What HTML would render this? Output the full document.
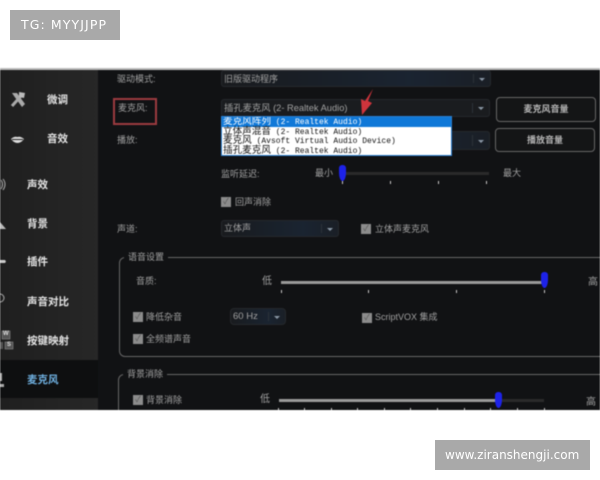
<!DOCTYPE html>
<html><head><meta charset="utf-8"><style>
html,body{margin:0;padding:0;background:#fff}
#r{position:relative;width:600px;height:480px;overflow:hidden;background:#fff;font-family:"Liberation Sans","Noto Sans CJK SC",sans-serif}
#a{position:absolute;left:0;top:68px;width:600px;height:342px;background:#111214;border-top:2px solid #bbb;box-sizing:border-box;overflow:hidden;filter:blur(.45px)}
.x{position:absolute}
.w{position:absolute;background:#a9a9a9;color:#fff;font-family:"DejaVu Sans",sans-serif;font-size:12px;line-height:30px;height:30px}
.t{position:absolute;color:#a0a0a0;font-size:9px;line-height:12px;white-space:nowrap}
.n{position:absolute;color:#e4e4e4;font-size:10.500px;line-height:14px;font-weight:bold;white-space:nowrap}
.d{position:absolute;border-radius:3px;background:linear-gradient(90deg,#191b1e,#1a2431 70%,#1a1f26);border:1px solid #25282c;box-sizing:border-box}
.d:after{content:"";position:absolute;right:5px;top:50%;margin-top:-1px;border:3px solid transparent;border-top:3px solid #8a97a5}
.d:before{content:"";position:absolute;right:16px;top:3px;bottom:3px;width:1px;background:#2c3238}
.b{position:absolute;border:1px solid #666;border-radius:4px;box-sizing:border-box;color:#b5b5b5;font-size:9px;font-weight:bold;text-align:center;background:#141516}
.c{position:absolute;width:10px;height:10px;background:#8c8c8c;color:#555;font-size:8px;line-height:10px;text-align:center}
.k{position:absolute;width:1px;height:3px;background:#ccc}
.h{position:absolute;width:7px;height:16px;background:#1d22e8;border-radius:3px 3px 50% 50%}
.g{position:absolute;border:1px solid #666;border-radius:6px;box-sizing:border-box;width:600px}
.l{position:absolute;background:#111214;color:#a0a0a0;font-size:9px;line-height:12px;padding:0 4px}
#m{position:absolute;left:221px;top:46px;width:231px;height:40px;background:#fff;border:1px solid #2a7fd0;box-sizing:border-box;color:#111;font-family:"Liberation Mono",monospace;font-size:8px;line-height:9.500px;white-space:nowrap;overflow:hidden}
#m div{height:9.500px;padding-left:1px}
#m i{font-style:normal;font-family:"Liberation Serif","Noto Sans CJK SC",sans-serif;font-size:9.600px}
</style></head><body><div id="r">
<div class="w" style="left:10px;top:10px;width:110px;padding-left:11px;box-sizing:border-box;font-size:12.500px;letter-spacing:1.100px">TG: MYYJJPP</div>
<div class="w" style="left:435px;top:440px;width:155px;padding-left:10px;box-sizing:border-box">www.ziranshengji.com</div>
<div id="a">
<div class="x" style="left:0;top:0;width:98px;height:340px;background:linear-gradient(90deg,#1f1f1f,#272727)"></div>
<div class="x" style="left:0;top:290px;width:98px;height:38px;background:#0e0f10"></div>

<svg class="x" style="left:0;top:0" width="98" height="340" viewBox="0 70 98 340">
<path d="M12 93l5 0 8 11-3 3-8-11z" fill="#aaa"/>
<path d="M12 106l9-10" stroke="#aaa" stroke-width="3" fill="none"/>
<path d="M19 92l6 1-1 5-5-1z" fill="#bbb"/>
<path d="M11 139q3-3 6.500-2 3-1 6.500 2-3 4-6.500 4t-6.500-4z" fill="#ddd"/><path d="M12 139.500h11" stroke="#222"/>
<path d="M1 180q3 4 0 9M3 179q4 5 0 11" stroke="#aaa" fill="none"/>
<path d="M0 229l0-7 6 7z" fill="#bbb"/>
<path d="M0 260h5l1 1.500-1 1.500h-5z" fill="#ccc"/>
<circle cx="0" cy="298" r="4" stroke="#aaa" fill="none"/>
<rect x="2" y="331" width="8" height="8" fill="#555" stroke="#888" stroke-width=".6"/>
<rect x="5" y="342" width="8" height="7" fill="#555" stroke="#888" stroke-width=".6"/>
<rect x="-4" y="342" width="7" height="7" fill="#555"/>
<path d="M0 373h2v8h-2zM0 384h4v3h-4z" fill="#aaa"/>
</svg>
<div class="x" style="left:3px;top:260px;color:#ddd;font-size:6px;font-weight:bold;line-height:8px">W</div>
<div class="x" style="left:7px;top:271px;color:#ddd;font-size:6px;font-weight:bold;line-height:8px">S</div>

<div class="n" style="left:47px;top:23px">微调</div>
<div class="n" style="left:47px;top:62px">音效</div>
<div class="n" style="left:27px;top:108px">声效</div>
<div class="n" style="left:27px;top:147px">背景</div>
<div class="n" style="left:27px;top:185px">插件</div>
<div class="n" style="left:27px;top:225px">声音对比</div>
<div class="n" style="left:27px;top:264px">按键映射</div>
<div class="n" style="left:27px;top:303px;color:#6fb0e0">麦克风</div>

<div class="t" style="left:117px;top:3px">驱动模式:</div>
<div class="t" style="left:118px;top:32px">麦克风:</div>
<div class="t" style="left:117px;top:64px">播放:</div>
<div class="t" style="left:117px;top:153px">声道:</div>
<div class="x" style="left:113px;top:28px;width:44px;height:27px;border:2px solid #9c3a40;box-sizing:border-box"></div>

<div class="d" style="left:221px;top:0;width:270px;height:17px"></div>
<div class="t" style="left:224px;top:3px">旧版驱动程序</div>
<div class="d" style="left:221px;top:29px;width:269px;height:18px;background:#1a1c1f"></div>
<div class="t" style="left:224px;top:32px;font-size:9.300px">插孔麦克风 (2- Realtek Audio)</div>
<div class="d" style="left:221px;top:61px;width:269px;height:19px"></div>
<div id="m">
<div style="background:#0f78d8;color:#fff"><i>麦克风阵列</i> (2- Realtek Audio)</div>
<div><i>立体声混音</i> (2- Realtek Audio)</div>
<div><i>麦克风</i> (Avsoft Virtual Audio Device)</div>
<div><i>插孔麦克风</i> (2- Realtek Audio)</div>
</div>
<svg class="x" style="left:355px;top:15px" width="25" height="35"><path d="M18 4L13 16 17 18 7 30 6 14 10 16z" fill="#cf343c"/></svg>

<div class="b" style="left:496px;top:27px;width:100px;height:25px;line-height:23px">麦克风音量</div>
<div class="b" style="left:495px;top:58px;width:100px;height:24px;line-height:22px">播放音量</div>

<div class="t" style="left:221px;top:98px">监听延迟:</div>
<div class="t" style="left:315px;top:97px">最小</div>
<div class="t" style="left:503px;top:97px">最大</div>
<div class="x" style="left:343px;top:102px;width:146px;height:3px;background:#2a2a2a"></div>
<div class="h" style="left:339px;top:95px"></div>
<div class="k" style="left:342px;top:111px"></div><div class="k" style="left:390px;top:111px"></div><div class="k" style="left:438px;top:111px"></div><div class="k" style="left:486px;top:111px"></div>

<div class="c" style="left:221px;top:127px">✓</div>
<div class="t" style="left:235px;top:126px">回声消除</div>
<div class="d" style="left:221px;top:150px;width:118px;height:17px"></div>
<div class="t" style="left:224px;top:152px">立体声</div>
<div class="c" style="left:361px;top:154px">✓</div>
<div class="t" style="left:375px;top:153px">立体声麦克风</div>

<div class="g" style="left:119px;top:187px;height:100px"></div>
<div class="l" style="left:124px;top:181px">语音设置</div>
<div class="t" style="left:136px;top:205px">音质:</div>
<div class="t" style="left:262px;top:206px;font-size:10px">低</div>
<div class="t" style="left:588px;top:207px;font-size:10px">高</div>
<div class="x" style="left:281px;top:211px;width:263px;height:3px;background:#9a9a9a"></div>
<div class="h" style="left:541px;top:202px"></div>
<div class="k" style="left:281px;top:220px"></div><div class="k" style="left:368px;top:220px"></div><div class="k" style="left:456px;top:220px"></div><div class="k" style="left:544px;top:220px"></div>

<div class="c" style="left:133px;top:242px">✓</div>
<div class="t" style="left:146px;top:241px">降低杂音</div>
<div class="c" style="left:133px;top:264px">✓</div>
<div class="t" style="left:146px;top:263px">全频谱声音</div>
<div class="d" style="left:230px;top:238px;width:56px;height:17px;border-radius:4px"></div>
<div class="t" style="left:233px;top:241px;font-size:9.500px">60 Hz</div>
<div class="c" style="left:362px;top:243px">✓</div>
<div class="t" style="left:375px;top:241px">ScriptVOX 集成</div>

<div class="g" style="left:118px;top:304px;height:80px"></div>
<div class="l" style="left:123px;top:298px">背景消除</div>
<div class="c" style="left:133px;top:325px">✓</div>
<div class="t" style="left:146px;top:324px">背景消除</div>
<div class="t" style="left:260px;top:324px;font-size:10px">低</div>
<div class="t" style="left:586px;top:327px;font-size:10px">高</div>
<div class="x" style="left:279px;top:329px;width:219px;height:3px;background:#9a9a9a"></div>
<div class="x" style="left:498px;top:329px;width:46px;height:3px;background:#2a2a2a"></div>
<div class="h" style="left:495px;top:322px"></div>
<div class="k" style="left:278px;top:338px"></div><div class="k" style="left:304px;top:338px"></div><div class="k" style="left:331px;top:338px"></div><div class="k" style="left:357px;top:338px"></div><div class="k" style="left:384px;top:338px"></div><div class="k" style="left:410px;top:338px"></div><div class="k" style="left:437px;top:338px"></div><div class="k" style="left:464px;top:338px"></div><div class="k" style="left:490px;top:338px"></div><div class="k" style="left:517px;top:338px"></div><div class="k" style="left:544px;top:338px"></div>
</div>
</div></body></html>
